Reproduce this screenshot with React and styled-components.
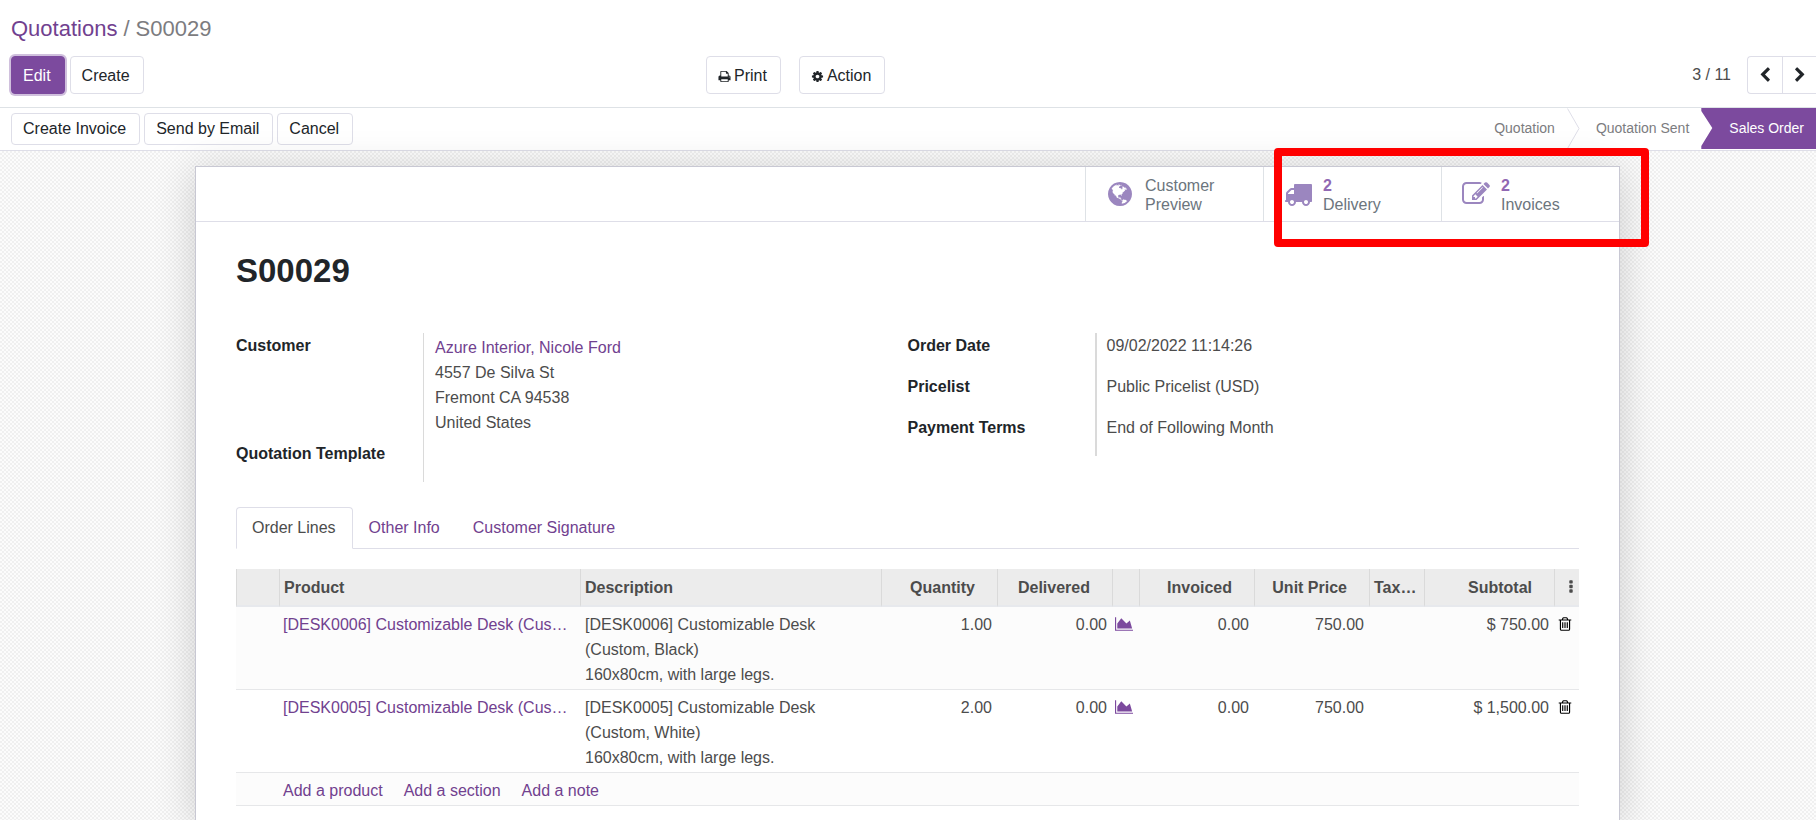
import React from 'react';
import styled, { createGlobalStyle } from 'styled-components';

const GlobalStyle = createGlobalStyle`
  *, *::before, *::after { box-sizing: border-box; }
  body {
    margin: 0;
    background: #fff;
    color: #4c4c4c;
    font: 16px/24px "Liberation Sans", Arial, sans-serif;
  }
  h1, p, ol, ul { margin: 0; padding: 0; list-style: none; }
  button { font: inherit; cursor: pointer; }
  a { color: #71418f; text-decoration: none; }
`;

/* ---------- icons ---------- */

const ICONS = {
  print: [1792, 'M448 1536h896v-256h-896v256zm0-640h896v-384h-160q-40 0-68-28t-28-68v-160h-640v640zm1152 64q0-26-19-45t-45-19-45 19-19 45 19 45 45 19 45-19 19-45zm128 0v416q0 13-9.5 22.5t-22.5 9.5h-224v160q0 40-28 68t-68 28h-960q-40 0-68-28t-28-68v-160h-224q-13 0-22.5-9.5t-9.5-22.5v-416q0-79 56.5-135.5t135.5-56.5h64v-544q0-40 28-68t68-28h672q40 0 88 20t76 48l152 152q28 28 48 76t20 88v256h64q79 0 135.5 56.5t56.5 135.5z'],
  cog: [1792, 'M1152 896q0-106-75-181t-181-75-181 75-75 181 75 181 181 75 181-75 75-181zm512-109v222q0 12-8 23t-20 13l-185 28q-19 54-39 91 35 50 107 138 10 12 10 25t-9 23q-27 37-99 108t-94 71q-12 0-26-9l-138-108q-44 23-91 38-16 136-29 186-7 28-36 28h-222q-14 0-24.5-8.5t-11.5-21.5l-28-184q-49-16-90-37l-141 107q-10 9-25 9-14 0-25-11-126-114-165-168-7-10-7-23 0-12 8-23 15-21 51-66.5t54-70.5q-27-50-41-99l-183-27q-13-2-21-12.5t-8-23.5v-222q0-12 8-23t19-13l186-28q14-46 39-92-40-57-107-138-10-12-10-24 0-10 9-23 26-36 98.5-107.5t94.5-71.5q13 0 26 10l138 107q44-23 91-38 16-136 29-186 7-28 36-28h222q14 0 24.5 8.5t11.5 21.5l28 184q49 16 90 37l142-107q9-9 24-9 13 0 25 10 129 119 165 170 7 8 7 22 0 12-8 23-15 21-51 66.5t-54 70.5q26 50 41 98l183 28q13 2 21 12.5t8 23.5z'],
  left: [1792, 'M1427 301l-531 531 531 531q19 19 19 45t-19 45l-166 166q-19 19-45 19t-45-19l-742-742q-19-19-19-45t19-45l742-742q19-19 45-19t45 19l166 166q19 19 19 45t-19 45z'],
  right: [1792, 'M1363 877l-742 742q-19 19-45 19t-45-19l-166-166q-19-19-19-45t19-45l531-531-531-531q-19-19-19-45t19-45l166-166q19-19 45-19t45 19l742 742q19 19 19 45t-19 45z'],
  globe: [1792, 'M896 128q209 0 385.5 103t279.5 279.5 103 385.5-103 385.5-279.5 279.5-385.5 103-385.5-103-279.5-279.5-103-385.5 103-385.5 279.5-279.5 385.5-103zm274 521q-2 1-9.5 9.5t-13.5 9.5q2 0 4.5-5t5-11 3.5-7q6-7 22-15 14-6 52-12 34-8 51 11-2-2 9.5-13t14.5-12q3-2 15-4.5t15-7.5l2-22q-12 1-17.5-7t-6.5-21q0 2-6 8 0-7-4.5-8t-11.5 1-9 1q-10-3-15-7.5t-8-16.5-4-15q-2-5-9.5-11t-9.5-10q-1-2-2.5-5.5t-3-6.5-4-5.5-5.5-2.5-7 5-7.5 10-4.5 5q-3-2-6-1.5t-4.5 1-4.5 3-5 3.5q-3 2-8.5 3t-8.5 2q15-5-1-11-10-4-16-3 9-4 7.5-12t-8.5-14h5q-1-4-8.5-8.5t-17.5-8.5-13-6q-8-5-34-9.5t-33-.5q-5 6-4.5 10.5t4 14 3.5 12.5q1 6-5.5 13t-6.5 12q0 7 14 15.5t10 21.5q-3 8-16 16t-16 12q-5 8-1.5 18.5t10.5 16.5q2 2 1.5 4t-3.5 4.5-5.5 4-6.5 3.5l-3 2q-11 5-20.5-6t-13.5-26q-7-25-16-30-23-8-29 1-5-13-41-26-25-9-58-4 6-1 0-15-7-15-19-12 3-6 4-17.5t1-13.5q3-13 12-23 1-1 7-8.5t9.5-13.5.5-6q35 4 50-11 5-5 11.5-17t10.5-17q9-6 14-5.5t14.5 5.5 14.5 5q14 1 15.5-11t-7.5-20q12 1 3-17-4-7-8-9-12-4-27 5-8 4 2 8-1-1-9.5 10.5t-16.5 17.5-16-5q-1-1-5.5-13.5t-9.5-13.5q-8 0-16 15 3-8-11-15t-24-8q19-12-8-27-7-4-20.5-5t-19.5 4q-5 7-5.5 11.5t5 8 10.5 5.5 11.5 4 8.5 3q14 10 8 14-2 1-8.5 3.5t-11.5 4.5-6 4q-3 4 0 14t-2 14q-5-5-9-17.5t-7-16.5q7 9-25 6l-10-1q-4 0-16 2t-20.5 1-13.5-8q-4-8 0-20 1-4 4-2-4-3-11-9.5t-10-8.5q-46 15-94 41 6 1 12-1 5-2 13-6.5t10-5.5q34-14 42-7l5-5q14 16 20 25-7-4-30-1-20 6-22 12 7 12 5 18-4-3-11.5-10t-14.5-11-15-5q-16 0-22 1-146 80-235 222 7 7 12 8 4 1 5 9t2.5 11 11.5-3q9 8 3 19 1-1 44 27 19 17 21 21 3 11-10 18-1-2-9-9t-9-4q-3 5 .5 18.5t10.5 12.5q-7 0-9.5 16t-2.5 35.5-1 23.5l2 1q-3 12 5.5 34.5t21.5 19.5q-13 3 20 43 6 8 8 9 3 2 12 7.5t15 10 10 10.5q4 5 10 22.5t14 23.5q-2 6 9.5 20t10.5 23q-1 0-2.5 1t-2.5 1q3 7 15.5 14t15.5 13q1 3 2 10t3 11 8 2q2-20-24-62-15-25-17-29-3-5-5.5-15.5t-4.5-14.5q2 0 6 1.5t8.5 3.5 7.5 4 2 3q-3 7 2 17.5t12 18.5 17 19 12 13q6 6 14 19.5t0 13.5q9 0 20 10.5t17 19.5q5 8 8 26t5 24q2 7 8.5 13.5t12.5 9.5l16 8 13 7q5 2 18.5 10.5t21.5 11.5q10 4 16 4t14.5-2.5 13.5-3.5q15-2 29 15t21 21q36 19 55 11-2 1 .5 7.5t8 15.5 9 14.5 5.5 8.5q5 6 18 15t18 15q6-4 7-9-3 8 7 20t18 10q14-3 14-32-31 15-49-18 0-1-2.5-5.5t-4-8.5-2.5-8.5 0-7.5 5-3q9 0 10-3.5t-2-12.5-4-13q-1-8-11-20t-12-15q-5 9-16 8t-16-9q0 1-1.5 5.5t-1.5 6.5q-13 0-15-1 1-3 2.5-17.5t3.5-22.5q1-4 5.5-12t7.5-14.5 4-12.5-4.5-9.5-17.5-2.5q-19 1-26 20-1 3-3 10.5t-5 11.5-9 7q-7 3-24 2t-24-5q-13-8-22.5-29t-9.5-37q0-10 2.5-26.5t3-25-5.5-24.5q3-2 9-9.5t10-10.5q2-1 4.5-1.5t4.5 0 4-1.5 3-6q-1-1-4-3-3-3-4-3 7 3 28.5-1.5t27.5 1.5q15 11 22-2 0-1-2.5-9.5t-.5-13.5q5 27 29 9 3 3 15.5 5t17.5 5q3 2 7 5.5t5.5 4.5 5-.5 8.5-6.5q10 14 12 24 11 40 19 44 7 3 11 2t4.5-9.5 0-14-1.5-12.5l-1-8v-18l-1-8q-15-3-18.5-12t1.5-18.5 15-18.5q1-1 8-3.5t15.5-6.5 12.5-8q21-19 15-35 7 0 11-9-1 0-5-3t-7.5-5-4.5-2q9-5 2-16 5-3 7.5-11t7.5-10q9 12 21 2 8-8 1-16 5-7 20.5-10.5t18.5-9.5q7 2 8-2t1-12 3-12q4-5 15-9t13-5l17-11q3-4 0-4 18 2 31-11 10-11-6-20 3-6-3-9.5t-15-5.5q3-1 11.5-.5t10.5-1.5q15-10-7-16-17-5-43 12zm-163 877q206-36 351-189-3-3-12.5-4.5t-12.5-3.5q-18-7-24-8 1-7-2.5-13t-8-9-12.5-8-11-7q-2-2-7-6t-7-5.5-7.5-4.5-8.5-2-10 1l-3 1q-3 1-5.5 2.5t-5.5 3-4 3 0 2.5q-21-17-36-22-5-1-11-5.5t-10.5-7-10-1.5-11.5 7q-5 5-6 15t-2 13q-7-5 0-17.5t2-18.5q-3-6-10.5-4.5t-12 4.5-11.5 8.5-9 6.5-8.5 5.5-8.5 7.5q-3 4-6 12t-5 11q-2-4-11.5-6.5t-9.5-5.5q2 10 4 35t5 38q7 31-12 48-27 25-29 40-4 22 12 26 0 7-8 20.5t-7 21.5q0 6 2 16z'],
  truck: [1792, 'M640 1408q0-52-38-90t-90-38-90 38-38 90 38 90 90 38 90-38 38-90zm-384-512h384v-256h-158q-13 0-22 9l-195 195q-9 9-9 22v30zm1280 512q0-52-38-90t-90-38-90 38-38 90 38 90 90 38 90-38 38-90zm256-1088v1024q0 15-4 26.5t-13.5 18.5-16.5 11.5-23.5 6-22.5 2-25.5 0-22.5-.5q0 106-75 181t-181 75-181-75-75-181h-384q0 106-75 181t-181 75-181-75-75-181h-64q-3 0-22.5.5t-25.5 0-22.5-2-23.5-6-16.5-11.5-13.5-18.5-4-26.5q0-26 19-45t45-19v-320q0-8-.5-35t0-38 2.5-34.5 6.5-37 14-30.5 22.5-30l198-198q19-19 50.5-32t58.5-13h160v-192q0-26 19-45t45-19h1024q26 0 45 19t19 45z'],
  edit: [1792, 'M888 1184l116-116-152-152-116 116v56h96v96h56zm440-720q-16-16-33 1l-350 350q-17 17-1 33t33-1l350-350q17-17 1-33zm80 594v190q0 119-84.5 203.5t-203.5 84.5h-832q-119 0-203.5-84.5t-84.5-203.5v-832q0-119 84.5-203.5t203.5-84.5h832q63 0 117 25 15 7 18 23 3 17-9 29l-49 49q-14 14-32 8-23-6-45-6h-832q-66 0-113 47t-47 113v832q0 66 47 113t113 47h832q66 0 113-47t47-113v-126q0-13 9-22l64-64q15-15 35-7t20 29zm-96-738l288 288-672 672h-288v-288zm444 132l-92 92-288-288 92-92q28-28 68-28t68 28l152 152q28 28 28 68t-28 68z'],
  trash: [1792, 'M704 736v576q0 14-9 23t-23 9h-64q-14 0-23-9t-9-23v-576q0-14 9-23t23-9h64q14 0 23 9t9 23zm256 0v576q0 14-9 23t-23 9h-64q-14 0-23-9t-9-23v-576q0-14 9-23t23-9h64q14 0 23 9t9 23zm256 0v576q0 14-9 23t-23 9h-64q-14 0-23-9t-9-23v-576q0-14 9-23t23-9h64q14 0 23 9t9 23zm128 724v-948h-896v948q0 22 7 40.5t14.5 27 10.5 8.5h832q3 0 10.5-8.5t14.5-27 7-40.5zm-672-1076h448l-48-117q-7-9-17-11h-317q-10 2-17 11zm928 32v64q0 14-9 23t-23 9h-96v948q0 83-47 143.5t-113 60.5h-832q-66 0-113-58.5t-47-141.5v-952h-96q-14 0-23-9t-9-23v-64q0-14 9-23t23-9h309l70-167q15-37 54-63t79-26h320q40 0 79 26t54 63l70 167h309q14 0 23 9t9 23z'],
  chart: [2048, 'M2048 1536v128h-2048v-1536h128v1408h1920zm-384-1024l256 896h-1664v-576l448-576 576 576z'],
  dots: [1792, 'M1088 1248v192q0 40-28 68t-68 28h-192q-40 0-68-28t-28-68v-192q0-40 28-68t68-28h192q40 0 68 28t28 68zm0-512v192q0 40-28 68t-68 28h-192q-40 0-68-28t-28-68v-192q0-40 28-68t68-28h192q40 0 68 28t28 68zm0-512v192q0 40-28 68t-68 28h-192q-40 0-68-28t-28-68v-192q0-40 28-68t68-28h192q40 0 68 28t28 68z'],
};

const IconSvg = styled.svg`
  display: block;
  flex: none;
  height: ${(p) => p.$size}px;
  fill: currentColor;
`;

function Icon({ name, size = 16 }) {
  const [width, path] = ICONS[name];
  return (
    <IconSvg $size={size} viewBox={`0 0 ${width} 1792`} aria-hidden="true">
      <path d={path} />
    </IconSvg>
  );
}

/* ---------- page frame ---------- */

const Page = styled.div`
  display: flex;
  flex-direction: column;
  height: 100vh;
  overflow: hidden;
`;

const ControlPanel = styled.header`
  padding: 13px 0 13px 11px;
  border-bottom: 1px solid #dee2e6;
`;

const Breadcrumb = styled.nav`
  display: flex;
  gap: 6px;
  margin-bottom: 11px;
  font-size: 22px;
  line-height: 32px;
  color: #7c7c80;
`;

const ControlRow = styled.div`
  display: grid;
  grid-template-columns: 695px 1fr auto;
  align-items: center;
`;

const Group = styled.div`
  display: flex;
  align-items: center;
  gap: ${(p) => p.$gap || 0}px;
`;

const Button = styled.button`
  display: inline-flex;
  align-items: center;
  gap: 3px;
  height: ${(p) => (p.$small ? 32 : 38)}px;
  padding: ${(p) => (p.$small ? 0 : 2)}px 13px 0 11px;
  border: 1px solid ${(p) => (p.$primary ? '#7c4a9e' : '#dedee8')};
  border-radius: 4px;
  background: ${(p) => (p.$primary ? '#7c4a9e' : '#fff')};
  color: ${(p) => (p.$primary ? '#fff' : '#212529')};
  box-shadow: ${(p) => (p.$primary ? '0 0 0 2px #d0c0dd' : 'none')};
`;

const PagerCount = styled.span`
  margin-right: 16px;
`;

const PagerButton = styled.button`
  display: flex;
  align-items: center;
  justify-content: center;
  width: ${(p) => (p.$first ? 35 : 34)}px;
  height: 38px;
  padding: 0;
  border: 1px solid #dedee8;
  border-right: 0;
  border-radius: ${(p) => (p.$first ? '4px 0 0 4px' : '0')};
  background: #fff;
  color: #212529;
`;

const StatusBar = styled.div`
  display: flex;
  justify-content: space-between;
  align-items: stretch;
  height: 43px;
  padding-left: 11px;
  border-bottom: 1px solid #dedee8;
`;

const Stages = styled.ol`
  display: flex;
  height: 41px;
  font-size: 14px;
  line-height: 41px;
  color: #7c7c80;
`;

const Stage = styled.li`
  display: flex;
  padding-left: ${(p) => (p.$current ? 28 : 16)}px;
  padding-right: 12px;
  background: ${(p) => (p.$current ? '#7c4a9e' : 'transparent')};
  color: ${(p) => (p.$current ? '#fff' : 'inherit')};
  clip-path: ${(p) =>
    p.$current ? 'polygon(0 0, 100% 0, 100% 100%, 0 100%, 0 38px, 11px 20px, 0 3px)' : 'none'};
`;

const StageArrow = styled.svg`
  display: block;
  width: 13px;
  height: 41px;
  fill: none;
  stroke: #dedee8;
`;

/* ---------- sheet ---------- */

const Canvas = styled.main`
  display: flex;
  flex: 1;
  min-height: 0;
  padding: 15px 196px 0 195px;
  background: repeating-conic-gradient(#f0f0f0 0 25%, #fcfcfc 0 50%) 0 0 / 4px 4px;
`;

const Sheet = styled.article`
  position: relative;
  flex: 1;
  min-width: 0;
  border: 1px solid #c8c8d3;
  border-bottom: 0;
  background: #fff;
  box-shadow: 0 5px 38px rgba(0, 0, 0, 0.18);
`;

const StatBar = styled.div`
  display: flex;
  justify-content: flex-end;
  height: 55px;
  border-bottom: 1px solid #dedee8;
`;

const StatButton = styled.button`
  display: flex;
  align-items: center;
  gap: 11px;
  width: 178px;
  padding: 0 0 0 20px;
  border: 0;
  border-left: 1px solid #dee2e6;
  background: #fff;
  color: #9b86bf;
  text-align: left;
`;

const StatText = styled.span`
  display: flex;
  flex-direction: column;
  padding-top: 2px;
  line-height: 19px;
  color: #6c757d;
`;

const StatValue = styled.strong`
  color: #9168b3;
`;

const Highlight = styled.div`
  position: absolute;
  top: -19px;
  right: -30px;
  width: 375px;
  height: 99px;
  border: 8px solid #f00;
  border-radius: 4px;
  pointer-events: none;
`;

const SheetBody = styled.div`
  padding: 30px 40px 0;
`;

const Title = styled.h1`
  margin-bottom: 43px;
  font-size: 33px;
  line-height: 38px;
  color: #212529;
`;

const Fields = styled.div`
  display: grid;
  grid-template-columns: 1fr 1fr;
  align-items: start;
  margin-bottom: 25px;
  line-height: 25px;
`;

const FieldList = styled.dl`
  display: grid;
  grid-template-columns: 187px 1fr;
  margin: 0;
`;

const FieldLabel = styled.dt`
  font-weight: bold;
  color: #212529;
`;

const FieldValue = styled.dd`
  min-height: 41px;
  margin: 0;
  padding: ${(p) => (p.$tall ? '2px 0 6px 11px' : '0 0 0 10px')};
  border-left: ${(p) => (p.$rule || 1)}px solid #dadada;
`;

const Tabs = styled.div`
  display: flex;
  height: 42px;
  margin-bottom: 20px;
  border-bottom: 1px solid #dedee8;
`;

const Tab = styled.button`
  height: 42px;
  padding: 0 16px 0 15px;
  border: 1px solid transparent;
  border-radius: 4px 4px 0 0;
  background: transparent;
  color: #71418f;

  &[aria-selected='true'] {
    border-color: #dedee8 #dedee8 #fff;
    background: #fff;
    color: #4c4c4c;
  }
`;

/* ---------- order lines ---------- */

const Lines = styled.table`
  width: 100%;
  table-layout: fixed;
  border-collapse: separate;
  border-spacing: 0;
  line-height: 25px;
`;

const Col = styled.col`
  width: ${(p) => (p.$w ? `${p.$w}px` : 'auto')};
`;

const Head = styled.th`
  height: 38px;
  padding: 0 ${(p) => (p.$num ? 22 : 4)}px 0 4px;
  border-left: 1px solid #dadada;
  border-bottom: 2px solid #e7e9ed;
  background: #ececec;
  text-align: ${(p) => (p.$num ? 'right' : 'left')};
  white-space: nowrap;
`;

const Row = styled.tr`
  background: ${(p) => (p.$odd ? '#fcfcfc' : '#fff')};
`;

const Cell = styled.td`
  padding: 5px 5px 2px ${(p) => (p.$link ? 4 : 5)}px;
  border-bottom: 1px solid #e6e7e9;
  vertical-align: top;
  text-align: ${(p) => (p.$num ? 'right' : 'left')};
  white-space: ${(p) => (p.$link ? 'nowrap' : 'pre-line')};
`;

const IconButton = styled.button`
  display: flex;
  align-items: center;
  height: 24px;
  margin: 0;
  padding: 0;
  border: 0;
  background: transparent;
  color: ${(p) => p.$color};
`;

const IconCell = styled.td`
  padding: 5px 0 2px 3px;
  border-bottom: 1px solid #e6e7e9;
  vertical-align: top;
`;

const DotsHead = styled(Head)`
  padding: 0 0 0 8px;
`;

const LINES = [
  {
    product: '[DESK0006] Customizable Desk (Cus…',
    description: '[DESK0006] Customizable Desk (Custom, Black)\n160x80cm, with large legs.',
    qty: '1.00',
    delivered: '0.00',
    invoiced: '0.00',
    price: '750.00',
    subtotal: '$ 750.00',
  },
  {
    product: '[DESK0005] Customizable Desk (Cus…',
    description: '[DESK0005] Customizable Desk (Custom, White)\n160x80cm, with large legs.',
    qty: '2.00',
    delivered: '0.00',
    invoiced: '0.00',
    price: '750.00',
    subtotal: '$ 1,500.00',
  },
];

const COLUMN_WIDTHS = [43, null, null, 116, 115, 27, 115, 115, 55, 130, 25];

function OrderLines() {
  return (
    <Lines>
      <colgroup>
        {COLUMN_WIDTHS.map((w, i) => (
          <Col key={i} $w={w} />
        ))}
      </colgroup>
      <thead>
        <tr>
          <Head />
          <Head scope="col">Product</Head>
          <Head scope="col">Description</Head>
          <Head scope="col" $num>Quantity</Head>
          <Head scope="col" $num>Delivered</Head>
          <Head />
          <Head scope="col" $num>Invoiced</Head>
          <Head scope="col" $num>Unit Price</Head>
          <Head scope="col">Tax…</Head>
          <Head scope="col" $num>Subtotal</Head>
          <DotsHead>
            <IconButton type="button" aria-label="Optional columns" $color="#4c4c4c">
              <Icon name="dots" />
            </IconButton>
          </DotsHead>
        </tr>
      </thead>
      <tbody>
        {LINES.map((line, i) => (
          <Row key={line.product} $odd={i % 2 === 0}>
            <Cell />
            <Cell $link>
              <a href="#product">{line.product}</a>
            </Cell>
            <Cell>{line.description}</Cell>
            <Cell $num>{line.qty}</Cell>
            <Cell $num>{line.delivered}</Cell>
            <IconCell>
              <IconButton type="button" aria-label="Forecast" $color="#7c4a9e">
                <Icon name="chart" />
              </IconButton>
            </IconCell>
            <Cell $num>{line.invoiced}</Cell>
            <Cell $num>{line.price}</Cell>
            <Cell />
            <Cell $num>{line.subtotal}</Cell>
            <IconCell>
              <IconButton type="button" aria-label="Delete row" $color="#000">
                <Icon name="trash" />
              </IconButton>
            </IconCell>
          </Row>
        ))}
        <Row $odd>
          <Cell />
          <Cell colSpan={10} $link>
            <Group $gap={21}>
              <a href="#add-product">Add a product</a>
              <a href="#add-section">Add a section</a>
              <a href="#add-note">Add a note</a>
            </Group>
          </Cell>
        </Row>
      </tbody>
    </Lines>
  );
}

function Field({ label, rule, tall, children }) {
  return (
    <>
      <FieldLabel>{label}</FieldLabel>
      <FieldValue $rule={rule} $tall={tall}>{children}</FieldValue>
    </>
  );
}

export default function App() {
  return (
    <>
      <GlobalStyle />
      <Page>
        <ControlPanel>
          <Breadcrumb aria-label="Breadcrumb">
            <a href="#quotations">Quotations</a>
            <span>/</span>
            <span>S00029</span>
          </Breadcrumb>
          <ControlRow>
            <Group $gap={5}>
              <Button type="button" $primary>Edit</Button>
              <Button type="button">Create</Button>
            </Group>
            <Group $gap={18}>
              <Button type="button">
                <Icon name="print" size={13} />
                Print
              </Button>
              <Button type="button">
                <Icon name="cog" size={13} />
                Action
              </Button>
            </Group>
            <Group>
              <PagerCount>3 / 11</PagerCount>
              <PagerButton type="button" aria-label="Previous" $first>
                <Icon name="left" />
              </PagerButton>
              <PagerButton type="button" aria-label="Next">
                <Icon name="right" />
              </PagerButton>
            </Group>
          </ControlRow>
        </ControlPanel>

        <StatusBar>
          <Group $gap={4}>
            <Button type="button" $small>Create Invoice</Button>
            <Button type="button" $small>Send by Email</Button>
            <Button type="button" $small>Cancel</Button>
          </Group>
          <Stages>
            <Stage>Quotation</Stage>
            <StageArrow viewBox="0 0 13 41" aria-hidden="true">
              <path d="M0.5 0.5L12 20.5L0.5 40.5" />
            </StageArrow>
            <Stage>Quotation Sent</Stage>
            <Stage $current aria-current="step">Sales Order</Stage>
          </Stages>
        </StatusBar>

        <Canvas>
          <Sheet>
            <StatBar>
              <StatButton type="button">
                <Icon name="globe" size={28} />
                <StatText>
                  <span>Customer</span>
                  <span>Preview</span>
                </StatText>
              </StatButton>
              <StatButton type="button">
                <Icon name="truck" size={28} />
                <StatText>
                  <StatValue>2</StatValue>
                  <span>Delivery</span>
                </StatText>
              </StatButton>
              <StatButton type="button">
                <Icon name="edit" size={28} />
                <StatText>
                  <StatValue>2</StatValue>
                  <span>Invoices</span>
                </StatText>
              </StatButton>
            </StatBar>

            <SheetBody>
              <Title>S00029</Title>
              <Fields>
                <FieldList>
                  <Field label="Customer" tall>
                    <a href="#customer">Azure Interior, Nicole Ford</a>
                    <p>4557 De Silva St</p>
                    <p>Fremont CA 94538</p>
                    <p>United States</p>
                  </Field>
                  <Field label="Quotation Template" />
                </FieldList>
                <FieldList>
                  <Field label="Order Date" rule={2}>09/02/2022 11:14:26</Field>
                  <Field label="Pricelist" rule={2}>Public Pricelist (USD)</Field>
                  <Field label="Payment Terms" rule={2}>End of Following Month</Field>
                </FieldList>
              </Fields>

              <Tabs role="tablist">
                <Tab type="button" role="tab" aria-selected="true">Order Lines</Tab>
                <Tab type="button" role="tab" aria-selected="false">Other Info</Tab>
                <Tab type="button" role="tab" aria-selected="false">Customer Signature</Tab>
              </Tabs>

              <OrderLines />
            </SheetBody>

            <Highlight />
          </Sheet>
        </Canvas>
      </Page>
    </>
  );
}
